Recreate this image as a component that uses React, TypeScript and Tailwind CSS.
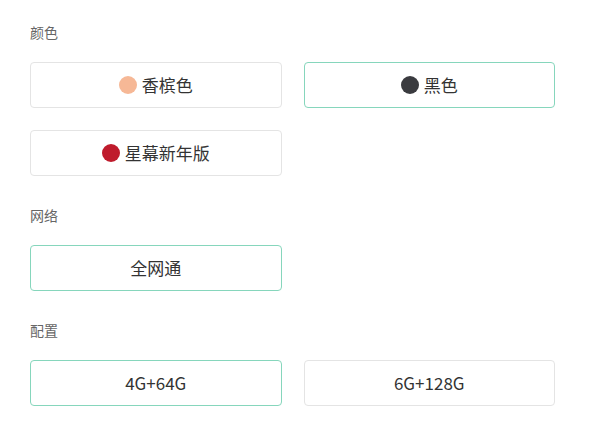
import React from "react";

type Option = {
  label: string;
  dot?: string;
  selected?: boolean;
};

const sections: { title: string; options: Option[] }[] = [
  {
    title: "颜色",
    options: [
      { label: "香槟色", dot: "bg-[#f6b896]" },
      { label: "黑色", dot: "bg-[#3a3b3f]", selected: true },
      { label: "星幕新年版", dot: "bg-[#bf1b2c]" },
    ],
  },
  {
    title: "网络",
    options: [{ label: "全网通", selected: true }],
  },
  {
    title: "配置",
    options: [
      { label: "4G+64G", selected: true },
      { label: "6G+128G" },
    ],
  },
];

function OptionButton({ option }: { option: Option }) {
  return (
    <button
      className={
        "h-[46px] rounded-[4px] border-[1.5px] bg-white flex items-center justify-center gap-[5px] text-[17px] text-[#333] " +
        (option.selected ? "border-[#86d6bc]" : "border-[#e4e4e4]")
      }
    >
      {option.dot && <span className={"w-[18px] h-[18px] rounded-full " + option.dot} />}
      <span>{option.label}</span>
    </button>
  );
}

export default function App() {
  return (
    <div
      className="w-[600px] h-[433px] bg-white px-[30px] pt-[22px]"
      style={{ fontFamily: '"Noto Sans CJK SC", "Noto Sans", sans-serif' }}
    >
      <div className="flex flex-col gap-[29px]">
        {sections.map((s) => (
          <div key={s.title}>
            <div className="text-[14px] leading-[20px] text-[#666] mb-[20px]">{s.title}</div>
            <div className="grid grid-cols-2 gap-[22px] w-[525px]">
              {s.options.map((o) => (
                <OptionButton key={o.label} option={o} />
              ))}
            </div>
          </div>
        ))}
      </div>
    </div>
  );
}
